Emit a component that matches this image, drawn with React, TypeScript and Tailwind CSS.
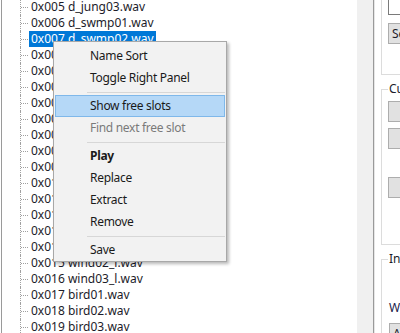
import React from 'react';

const rows = [
  '0x005 d_jung03.wav',
  '0x006 d_swmp01.wav',
  '0x007 d_swmp02.wav',
  '0x008 d_swmp03.wav',
  '0x009 d_wind01.wav',
  '0x00A d_wind02.wav',
  '0x00B d_wind03.wav',
  '0x00C d_cave01.wav',
  '0x00D d_cave02.wav',
  '0x00E d_cave03.wav',
  '0x00F d_town01.wav',
  '0x010 d_town02.wav',
  '0x011 d_town03.wav',
  '0x012 rain01.wav',
  '0x013 rain02.wav',
  '0x014 wind01_l.wav',
  '0x015 wind02_l.wav',
  '0x016 wind03_l.wav',
  '0x017 bird01.wav',
  '0x018 bird02.wav',
  '0x019 bird03.wav',
  '0x01A bird04.wav',
];

type MenuEntry = { label?: string; bold?: boolean; disabled?: boolean; hot?: boolean; sep?: boolean };

const menu: MenuEntry[] = [
  { label: 'Name Sort' },
  { label: 'Toggle Right Panel' },
  { sep: true },
  { label: 'Show free slots', hot: true },
  { label: 'Find next free slot', disabled: true },
  { sep: true },
  { label: 'Play', bold: true },
  { label: 'Replace' },
  { label: 'Extract' },
  { label: 'Remove' },
  { sep: true },
  { label: 'Save' },
];

const TreeRow: React.FC<{ text: string; selected?: boolean }> = ({ text, selected }) => (
  <div className="flex h-[16px] items-stretch">
    <div className="w-[18px] shrink-0" />
    <div className="flex w-[9px] shrink-0 items-stretch border-l border-dotted border-[#a0a0a0]">
      <div className="mt-[8px] h-0 w-[7px] border-t border-dotted border-[#a0a0a0]" />
    </div>
    <div
      className={
        selected
          ? 'flex items-center whitespace-nowrap bg-[#0078d7] px-[2px] text-white'
          : 'flex items-center whitespace-nowrap px-[2px] text-[#1c1c2a]'
      }
    >
      {text}
    </div>
  </div>
);

const GroupBox: React.FC<{ label?: string; className: string; children?: React.ReactNode }> = ({
  label,
  className,
  children,
}) => (
  <div className={`relative shrink-0 border border-r-0 border-[#dcdcdc] ${className}`}>
    {label && (
      <span className="absolute -top-[9px] left-[6px] whitespace-nowrap bg-white px-[1px] leading-[16px] text-[#1c1c2a]">
        {label}
      </span>
    )}
    {children}
  </div>
);

const WinButton: React.FC<{ label?: string; className: string }> = ({ label, className }) => (
  <div
    className={`flex h-[21px] w-[60px] items-center whitespace-nowrap border border-[#adadad] bg-[#e1e1e1] pl-[3px] text-[#1c1c2a] ${className}`}
  >
    {label}
  </div>
);

const App: React.FC = () => {
  return (
    <div
      className="relative flex h-[333px] w-[400px] overflow-hidden bg-white text-[12px] leading-[16px]"
      style={{ fontFamily: '"Noto Sans", "Open Sans", sans-serif' }}
    >
      {/* Tree view */}
      <div className="ml-[1px] flex w-[356px] shrink-0 flex-col border-l border-[#9a9a9a] bg-white">
        <div className="-mt-[1px] flex flex-col">
          {rows.map((r, i) => (
            <TreeRow key={r} text={r} selected={i === 2} />
          ))}
        </div>
      </div>

      {/* Scrollbar track */}
      <div className="w-[16px] shrink-0 bg-[#f0f0f0]" />
      <div className="w-[1px] shrink-0 bg-[#9a9a9a]" />
      <div className="w-[1px] shrink-0 bg-[#e6e6e6]" />

      {/* Right panel */}
      <div className="flex flex-1 flex-col overflow-hidden bg-white pl-[6px]">
        <GroupBox className="-mt-[31px] h-[106px] pl-[6px] pt-[22px]">
          <div className="h-[23px] w-[60px] border border-[#7a7a7a] bg-white" />
          <WinButton label="Search" className="mt-[8px]" />
        </GroupBox>

        <GroupBox label="Current" className="mt-[14px] h-[156px] pl-[6px] pt-[11px]">
          <WinButton label="" className="" />
          <WinButton label="" className="mt-[6px]" />
          <WinButton label="" className="mt-[28px]" />
        </GroupBox>

        <GroupBox label="Insert" className="mt-[14px] h-[90px] pl-[7px] pt-[40px]">
          <div className="whitespace-nowrap text-[#1c1c4a]">Wave</div>
          <WinButton label="Add" className="mt-[7px]" />
        </GroupBox>
      </div>

      {/* Context menu */}
      <div className="absolute left-[53px] top-[41px] flex h-[221px] w-[174px] flex-col border border-[#a8a8a8] bg-[#f2f2f2] px-[1px] pt-[3px] text-black shadow-[2px_2px_3px_rgba(0,0,0,0.28)]">
        {menu.map((m, i) =>
          m.sep ? (
            <div key={i} className="flex h-[6px] items-center pl-[32px]">
              <div className="h-[1px] w-full bg-[#d7d7d7]" />
            </div>
          ) : (
            <div
              key={i}
              className={
                m.hot
                  ? 'flex h-[22px] items-center border border-[#7fb8ea] bg-[#b5d8f7] pl-[34px]'
                  : 'flex h-[22px] items-center border border-transparent pl-[34px]'
              }
            >
              <span
                className={`whitespace-nowrap tracking-[-0.3px] ${m.bold ? 'font-bold' : ''} ${
                  m.disabled ? 'text-[#7a7a7a]' : 'text-[#1a1a1a]'
                }`}
              >
                {m.label}
              </span>
            </div>
          )
        )}
      </div>
    </div>
  );
};

export default App;
